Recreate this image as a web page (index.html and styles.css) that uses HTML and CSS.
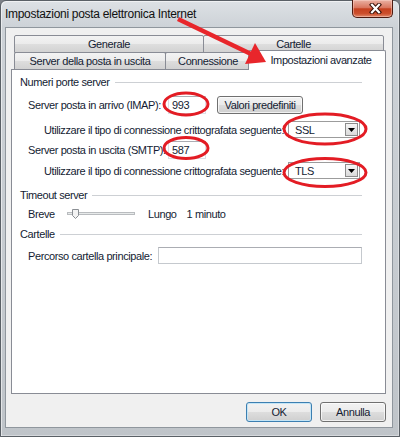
FILE: index.html
```html
<!DOCTYPE html>
<html lang="it">
<head>
<meta charset="utf-8">
<title>Impostazioni posta elettronica Internet</title>
<link rel="stylesheet" href="styles.css">
</head>
<body>
<div class="screen">
  <div class="window">
    <div class="titlebar">
      <span class="title">Impostazioni posta elettronica Internet</span>
      <div class="close-btn">
        <svg width="15" height="11" viewBox="0 0 15 11">
          <path d="M4 1.8 L11 9.2 M11 1.8 L4 9.2" stroke="#3a1209" stroke-width="4.2" stroke-linecap="square" fill="none"/>
          <path d="M4 1.8 L11 9.2 M11 1.8 L4 9.2" stroke="#ffffff" stroke-width="2.2" stroke-linecap="square" fill="none"/>
        </svg>
      </div>
    </div>
    <div class="client">
      <div class="tabs">
        <div class="tab-row back">
          <div class="tab tab-generale">Generale</div>
          <div class="tab tab-cartelle">Cartelle</div>
        </div>
        <div class="tab-row front">
          <div class="tab tab-server">Server della posta in uscita</div>
          <div class="tab tab-connessione">Connessione</div>
          <div class="tab tab-avanzate active">Impostazioni avanzate</div>
        </div>
      </div>
      <div class="panel">
        <div class="group-head gh-ports"><span>Numeri porte server</span><span class="rule"></span></div>
        <div class="row row-imap">
          <span class="port-label">Server posta in arrivo (IMAP):</span>
          <span class="textbox port-box">993</span>
          <button class="btn btn-defaults">Valori predefiniti</button>
        </div>
        <div class="row row-enc-in">
          <span class="indent">Utilizzare il tipo di connessione crittografata seguente:</span>
          <span class="combo"><span class="combo-value">SSL</span><span class="combo-arrow"><svg width="7" height="4" viewBox="0 0 7 4"><path d="M0 0 H7 L3.5 4 Z" fill="#000"/></svg></span></span>
        </div>
        <div class="row row-smtp">
          <span class="port-label">Server posta in uscita (SMTP):</span>
          <span class="textbox port-box">587</span>
        </div>
        <div class="row row-enc-out">
          <span class="indent">Utilizzare il tipo di connessione crittografata seguente:</span>
          <span class="combo"><span class="combo-value">TLS</span><span class="combo-arrow"><svg width="7" height="4" viewBox="0 0 7 4"><path d="M0 0 H7 L3.5 4 Z" fill="#000"/></svg></span></span>
        </div>
        <div class="group-head gh-timeout"><span>Timeout server</span><span class="rule"></span></div>
        <div class="row row-timeout">
          <span class="breve">Breve</span>
          <svg class="slider" width="68" height="12" viewBox="0 0 68 12">
            <rect x="0.5" y="4.5" width="67" height="2" fill="#e7eaea" stroke="#b9bcbf"/>
            <path d="M5.5 1.5 H11.5 V7.5 L8.5 10.5 L5.5 7.5 Z" fill="#f3f3f3" stroke="#8b8f94"/>
          </svg>
          <span class="lungo">Lungo</span>
          <span class="minuto">1 minuto</span>
        </div>
        <div class="group-head gh-folders"><span>Cartelle</span><span class="rule"></span></div>
        <div class="row row-path">
          <span class="path-label">Percorso cartella principale:</span>
          <span class="textbox path-box"></span>
        </div>
      </div>
      <div class="dialog-buttons">
        <button class="btn btn-ok">OK</button>
        <button class="btn btn-cancel">Annulla</button>
      </div>
    </div>
  </div>
  <svg class="annotations" width="400" height="437" viewBox="0 0 400 437">
    <g fill="none" stroke="#e31c24" stroke-width="3">
      <ellipse cx="186" cy="104" rx="22" ry="11"/>
      <ellipse cx="186" cy="148" rx="22" ry="10.5"/>
      <ellipse cx="325" cy="129" rx="41" ry="15"/>
      <ellipse cx="325" cy="172.5" rx="41" ry="14"/>
    </g>
    <line x1="178" y1="19" x2="251" y2="54" stroke="#e8262b" stroke-width="4.5"/>
    <polygon points="266,62 245,64 255,43" fill="#e8262b"/>
  </svg>
</div>
</body>
</html>
```
FILE: styles.css
```css
* { box-sizing: border-box; }
html, body { margin: 0; padding: 0; }
body {
  width: 400px;
  height: 437px;
  overflow: hidden;
  background: #7d8187;
  font-family: "Liberation Sans", Arial, sans-serif;
  font-size: 11px;
  letter-spacing: -0.4px;
  color: #141c33;
}
.screen { position: relative; width: 400px; height: 437px; }

.window {
  width: 400px;
  height: 437px;
  display: flex;
  flex-direction: column;
  padding: 0 6px 8px 4px;
  border: 1px solid #5a6066;
  border-radius: 6px 6px 0 0;
  background: linear-gradient(#dde1e5, #cdd2d7 26px, #c6cbd0 60%, #bfc4c9);
  box-shadow: inset 1px 1px 0 rgba(255,255,255,.55), inset -1px -1px 0 rgba(255,255,255,.35);
}
.titlebar { height: 26px; flex: none; display: flex; align-items: center; }
.title { font-size: 12px; letter-spacing: -0.3px; color: #111; margin-top: -1px; white-space: nowrap; }
.close-btn {
  margin-left: auto;
  align-self: flex-start;
  margin-top: -1px;
  width: 41px;
  height: 18px;
  display: flex;
  align-items: center;
  justify-content: center;
  padding-left: 6px;
  border: 1px solid #4d1a10;
  border-top: none;
  border-radius: 0 0 5px 5px;
  background: linear-gradient(#eab1a3, #d9765f 45%, #c5401f 52%, #cc4f2c 80%, #e08a6c);
  box-shadow: inset 0 0 0 1px rgba(255,220,210,.45);
}

.client {
  flex: 1;
  display: flex;
  flex-direction: column;
  background: #f0f0f0;
  border: 1px solid #8f969d;
}
.tabs { margin: 7px 0 0 8px; flex: none; }
.tab-row { display: flex; height: 18px; }
.tab-row.front { margin-top: -1px; align-items: flex-end; }
.tab {
  height: 18px;
  border: 1px solid #898c95;
  border-radius: 2px 2px 0 0;
  background: linear-gradient(#f3f3f3, #ebebeb 50%, #dedede 50%, #d2d2d2);
  display: flex;
  align-items: center;
  justify-content: center;
  white-space: nowrap;
}
.tab + .tab { margin-left: -1px; }
.tab-generale { width: 190px; }
.tab-cartelle { width: 181px; }
.tab-server { width: 152px; }
.tab-connessione { width: 86px; }
.tab.active {
  width: 138px;
  height: 20px;
  margin-left: -3px;
  background: #fff;
  border-bottom: none;
  position: relative;
  z-index: 2;
  padding-bottom: 2px;
  padding-left: 8px;
}

.panel {
  margin: -1px 0 0 5px;
  width: 375px;
  height: 325px;
  flex: none;
  background: #fff;
  border: 1px solid #898c95;
  padding: 5px 23px 0 8px;
  display: flex;
  flex-direction: column;
}
.group-head { display: flex; align-items: center; height: 14px; white-space: nowrap; flex: none; }
.group-head .rule { flex: 1; height: 1px; background: #cdd0d4; margin-left: 5px; }
.gh-timeout { margin-top: 9px; }
.gh-folders { margin-top: 6px; }

.row { display: flex; align-items: center; padding-left: 8px; white-space: nowrap; flex: none; }
.row-imap { height: 18px; margin-top: 7px; }
.row-enc-in { height: 17px; margin-top: 7px; }
.row-smtp { height: 18px; margin-top: 3px; }
.row-enc-out { height: 17px; margin-top: 3px; }
.row-timeout { height: 14px; margin-top: 5px; }
.row-path { height: 17px; margin-top: 6px; }

.port-label { width: 140px; }
.indent { margin-left: 16px; }
.textbox {
  background: #fff;
  border: 1px solid #dbdfe6;
  border-top-color: #abadb3;
  display: flex;
  align-items: center;
  padding-left: 3px;
}
.port-box { width: 38px; height: 18px; }
.path-label { width: 130px; }
.path-box { width: 204px; height: 17px; border-color: #c5c9ce; border-top-color: #abadb3; }

.combo {
  margin-left: auto;
  margin-right: 2px;
  width: 72px;
  height: 17px;
  border: 1px solid #9c9c9c;
  background: #fff;
  display: flex;
  align-items: center;
  padding-left: 6px;
}
.combo-arrow {
  margin-left: auto;
  margin-right: 1px;
  width: 13px;
  height: 13px;
  border: 1px solid #8c8c8c;
  background: linear-gradient(#f6f6f6, #dadada);
  display: flex;
  align-items: center;
  justify-content: center;
}

.breve { width: 39px; }
.slider { display: block; }
.lungo { margin-left: 13px; }
.minuto { margin-left: 10px; }

.btn {
  font: inherit;
  letter-spacing: inherit;
  color: #141c33;
  height: 20px;
  padding: 0;
  border: 1px solid #707070;
  border-radius: 3px;
  background: linear-gradient(#f2f2f2, #ebebeb 50%, #dddddd 51%, #cfcfcf);
  box-shadow: inset 0 0 0 1px rgba(255,255,255,.7);
}
.btn-defaults { width: 86px; height: 18px; margin-left: 11px; }
.dialog-buttons {
  display: flex;
  justify-content: flex-end;
  gap: 8px;
  margin: 8px 0 0 5px;
  width: 375px;
  flex: none;
}
.dialog-buttons .btn { width: 66px; height: 20px; }
.btn-ok {
  border-color: #3c7fb1;
  box-shadow: inset 0 0 0 1px #c4e5f6;
}

.annotations { position: absolute; left: 0; top: 0; z-index: 10; pointer-events: none; }
```
